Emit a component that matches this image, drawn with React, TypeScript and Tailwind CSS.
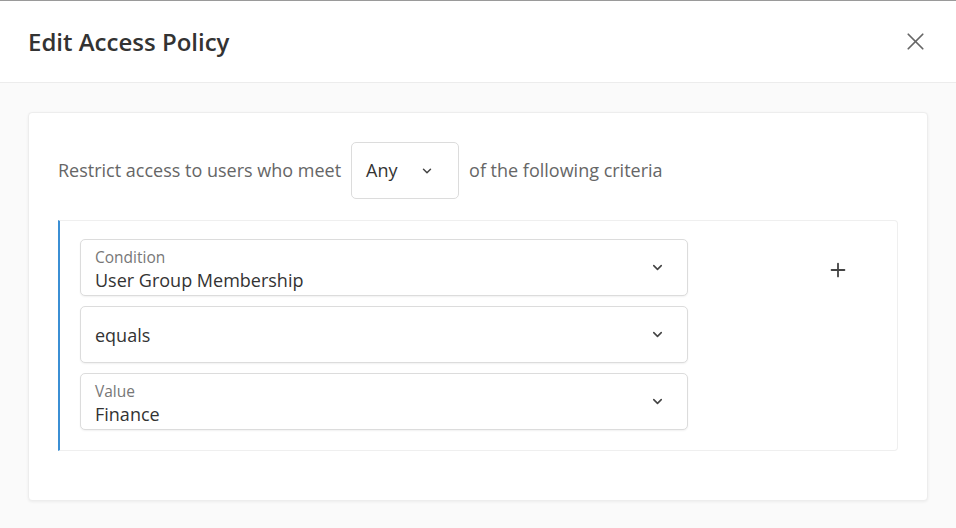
import { ChevronDown, Plus, X } from 'lucide-react';

type Field = { label?: string; value: string };

const fields: Field[] = [
  { label: 'Condition', value: 'User Group Membership' },
  { value: 'equals' },
  { label: 'Value', value: 'Finance' },
];

function SelectField({ label, value }: Field) {
  return (
    <div className="h-[57px] w-[608px] rounded-[5px] border border-[#dcdcdc] bg-white shadow-[0_1px_2px_rgba(0,0,0,0.06)] flex items-center justify-between pl-[14px] pr-[22px]">
      <div className={`flex flex-col ${label ? 'pt-[5px]' : ''}`}>
        {label && <span className="text-[15.5px] leading-[18px] text-[#777]">{label}</span>}
        <span className={`text-[18px] leading-[24px] text-[#333] ${label ? 'mt-[2px]' : ''}`}>{value}</span>
      </div>
      <ChevronDown size={15} strokeWidth={2.5} className="text-[#444]" />
    </div>
  );
}

export default function App() {
  return (
    <div className="w-[956px] h-[528px] overflow-hidden bg-[#fafafa] border-t border-[#9a9a9a] font-['Open_Sans',sans-serif]">
      <div className="h-[82px] bg-white border-b border-[#ececec] flex items-center justify-between pl-7 pr-[26px]">
        <h1 className="text-[24px] font-semibold text-[#333]">Edit Access Policy</h1>
        <X size={29} strokeWidth={1.4} className="text-[#666]" />
      </div>

      <div className="px-7 pt-[29px]">
        <div className="w-[900px] h-[389px] bg-white border border-[#ededed] rounded-[4px] shadow-[0_1px_3px_rgba(0,0,0,0.06)] px-[29px] pt-[29px]">
          <div className="flex items-center text-[18px] text-[#666]">
            <span>Restrict access to users who meet</span>
            <div className="ml-[10px] h-[57px] w-[108px] rounded-[5px] border border-[#dcdcdc] flex items-center justify-between pl-[14px] pr-[24px] text-[#333] text-[18px]">
              <span>Any</span>
              <ChevronDown size={14} strokeWidth={2.5} className="text-[#444]" />
            </div>
            <span className="ml-[10px]">of the following criteria</span>
          </div>

          <div className="mt-[21px] h-[231px] w-[840px] border border-[#efefef] border-l-2 border-l-[#3b8fd4] rounded-r-[4px] flex pl-[20px] pt-[18px]">
            <div className="flex flex-col gap-[10px]">
              {fields.map((f) => (
                <SelectField key={f.value} {...f} />
              ))}
            </div>
            <div className="ml-[139px] mt-[20px]">
              <Plus size={22} strokeWidth={2} className="text-[#444]" />
            </div>
          </div>
        </div>
      </div>
    </div>
  );
}
